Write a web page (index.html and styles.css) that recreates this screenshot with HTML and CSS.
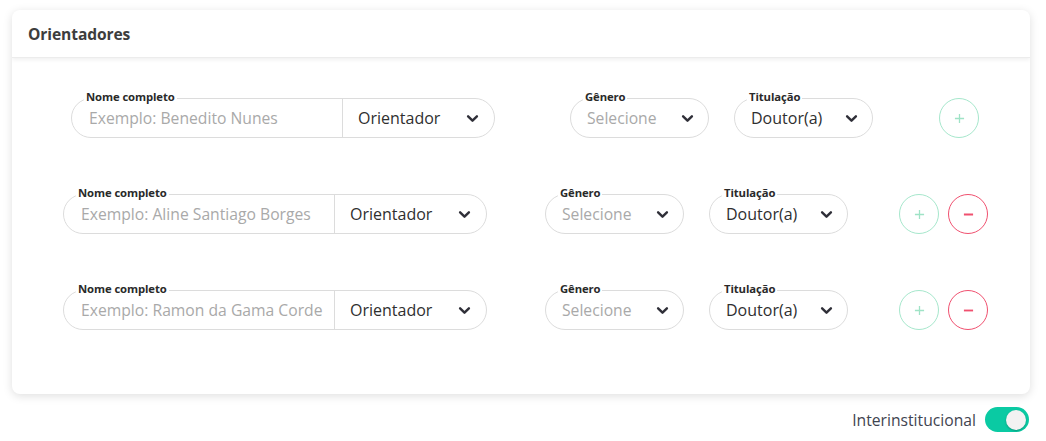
FILE: index.html
```html
<!DOCTYPE html>
<html lang="pt-BR">
<head>
<meta charset="utf-8">
<title>Orientadores</title>
<link rel="stylesheet" href="styles.css">
</head>
<body>
<div class="page">
  <section class="card">
    <header class="card-header">
      <h2 class="card-title">Orientadores</h2>
    </header>
    <div class="card-body">
      <div class="row row--single">
        <div class="field field--name">
          <span class="field-label">Nome completo</span>
          <span class="name-input placeholder">Exemplo: Benedito Nunes</span>
          <span class="name-role">Orientador<svg class="chev" viewBox="0 0 10 6"><path d="M1 1l4 4 4-4"/></svg></span>
        </div>
        <div class="field field--select gap-genero">
          <span class="field-label">Gênero</span>
          <span class="select-value placeholder">Selecione</span>
          <svg class="chev" viewBox="0 0 10 6"><path d="M1 1l4 4 4-4"/></svg>
        </div>
        <div class="field field--select gap-titul">
          <span class="field-label">Titulação</span>
          <span class="select-value">Doutor(a)</span>
          <svg class="chev" viewBox="0 0 10 6"><path d="M1 1l4 4 4-4"/></svg>
        </div>
        <div class="actions">
          <button class="circle-btn circle-btn--add" aria-label="Adicionar"><svg viewBox="0 0 12 12"><path d="M6 1v10M1 6h10"/></svg></button>
        </div>
      </div>

      <div class="row row--double">
        <div class="field field--name">
          <span class="field-label">Nome completo</span>
          <span class="name-input placeholder">Exemplo: Aline Santiago Borges</span>
          <span class="name-role">Orientador<svg class="chev" viewBox="0 0 10 6"><path d="M1 1l4 4 4-4"/></svg></span>
        </div>
        <div class="field field--select gap-genero">
          <span class="field-label">Gênero</span>
          <span class="select-value placeholder">Selecione</span>
          <svg class="chev" viewBox="0 0 10 6"><path d="M1 1l4 4 4-4"/></svg>
        </div>
        <div class="field field--select gap-titul">
          <span class="field-label">Titulação</span>
          <span class="select-value">Doutor(a)</span>
          <svg class="chev" viewBox="0 0 10 6"><path d="M1 1l4 4 4-4"/></svg>
        </div>
        <div class="actions">
          <button class="circle-btn circle-btn--add" aria-label="Adicionar"><svg viewBox="0 0 12 12"><path d="M6 1v10M1 6h10"/></svg></button>
          <button class="circle-btn circle-btn--remove" aria-label="Remover"><svg viewBox="0 0 12 12"><path d="M1 6h10"/></svg></button>
        </div>
      </div>

      <div class="row row--double">
        <div class="field field--name">
          <span class="field-label">Nome completo</span>
          <span class="name-input placeholder">Exemplo: Ramon da Gama Corde</span>
          <span class="name-role">Orientador<svg class="chev" viewBox="0 0 10 6"><path d="M1 1l4 4 4-4"/></svg></span>
        </div>
        <div class="field field--select gap-genero">
          <span class="field-label">Gênero</span>
          <span class="select-value placeholder">Selecione</span>
          <svg class="chev" viewBox="0 0 10 6"><path d="M1 1l4 4 4-4"/></svg>
        </div>
        <div class="field field--select gap-titul">
          <span class="field-label">Titulação</span>
          <span class="select-value">Doutor(a)</span>
          <svg class="chev" viewBox="0 0 10 6"><path d="M1 1l4 4 4-4"/></svg>
        </div>
        <div class="actions">
          <button class="circle-btn circle-btn--add" aria-label="Adicionar"><svg viewBox="0 0 12 12"><path d="M6 1v10M1 6h10"/></svg></button>
          <button class="circle-btn circle-btn--remove" aria-label="Remover"><svg viewBox="0 0 12 12"><path d="M1 6h10"/></svg></button>
        </div>
      </div>
    </div>
  </section>

  <div class="switch-row">
    <span class="switch-label">Interinstitucional</span>
    <span class="switch"><span class="switch-knob"></span></span>
  </div>
</div>
</body>
</html>
```

FILE: styles.css
```css
* { box-sizing: border-box; }

html, body {
  margin: 0;
  padding: 0;
  background: #fff;
}

body {
  font-family: "Open Sans", "Noto Sans", "Liberation Sans", sans-serif;
  color: #333;
}

.page {
  padding: 10px 16px 0 12px;
}

.card {
  background: #fff;
  border-radius: 8px;
  box-shadow: 0 2px 10px rgba(0, 0, 0, 0.13);
  overflow: hidden;
}

.card-header {
  height: 48px;
  display: flex;
  align-items: center;
  padding-left: 16px;
  border-bottom: 1px solid #ececec;
  box-shadow: 0 2px 4px rgba(0, 0, 0, 0.06);
  position: relative;
}

.card-title {
  margin: 0;
  font-size: 15.6px;
  font-weight: 700;
  color: #3d3d3d;
  letter-spacing: -0.1px;
}

.card-body {
  padding: 40px 0 64px;
  display: flex;
  flex-direction: column;
  gap: 56px;
}

.row {
  display: flex;
  align-items: center;
  height: 40px;
}

.row--single { padding-left: 59px; }
.row--double { padding-left: 51px; }

.row--single .gap-genero { margin-left: 75px; }
.row--double .gap-genero { margin-left: 58px; }
.gap-titul { margin-left: 25px; }
.row--single .actions { margin-left: 66px; }
.row--double .actions { margin-left: 51px; }

.field {
  position: relative;
  height: 40px;
  border: 1px solid #dcdcdc;
  border-radius: 20px;
  display: flex;
  align-items: center;
  flex: none;
}

.field-label {
  position: absolute;
  left: 12px;
  top: -9px;
  padding: 0 2px;
  background: #fff;
  font-size: 11.3px;
  line-height: 14px;
  font-weight: 700;
  color: #2a2a2a;
  white-space: nowrap;
  letter-spacing: -0.1px;
}

.field--name { width: 424px; }

.name-input {
  width: 271px;
  height: 100%;
  display: flex;
  align-items: center;
  padding-left: 17px;
  border-right: 1px solid #dcdcdc;
  white-space: nowrap;
  overflow: hidden;
}

.name-role {
  flex: 1;
  display: flex;
  align-items: center;
  justify-content: space-between;
  padding: 0 16px 0 15px;
  font-size: 16px;
  color: #2f2f2f;
}

.placeholder {
  color: #a9a9a9;
  font-size: 15.7px;
}

.field--select {
  width: 139px;
  padding: 0 15px 0 16px;
  justify-content: space-between;
}

.select-value {
  font-size: 16px;
  color: #2f2f2f;
  white-space: nowrap;
}

.select-value.placeholder { color: #a9a9a9; font-size: 15.7px; }

.chev {
  width: 11px;
  height: 7px;
  flex: none;
  overflow: visible;
}

.chev path {
  fill: none;
  stroke: #2f2f38;
  stroke-width: 2.2;
  stroke-linecap: round;
  stroke-linejoin: round;
}

.actions {
  display: flex;
  gap: 9px;
}

.circle-btn {
  width: 40px;
  height: 40px;
  border-radius: 50%;
  background: #fff;
  padding: 0;
  display: flex;
  align-items: center;
  justify-content: center;
  cursor: pointer;
}

.circle-btn svg {
  width: 11px;
  height: 11px;
}

.circle-btn path {
  fill: none;
  stroke-width: 1.4;
}

.circle-btn--add { border: 1px solid #a6e7cc; }
.circle-btn--add path { stroke: #9fe3c6; }

.circle-btn--remove { border: 1px solid #f0506f; }
.circle-btn--remove path { stroke: #f0506f; stroke-width: 2; }

.switch-row {
  display: flex;
  justify-content: flex-end;
  align-items: center;
  gap: 9px;
  margin-top: 13px;
  padding-right: 1px;
}

.switch-label {
  font-size: 15.7px;
  color: #3f4450;
}

.switch {
  position: relative;
  width: 44px;
  height: 25px;
  border-radius: 13px;
  background: #0acaa3;
  display: flex;
  align-items: center;
  justify-content: flex-end;
  padding-right: 3px;
}

.switch-knob {
  width: 20px;
  height: 20px;
  border-radius: 50%;
  background: #f2f2f2;
  box-shadow: 0 1px 2px rgba(0, 0, 0, 0.25);
}
```
